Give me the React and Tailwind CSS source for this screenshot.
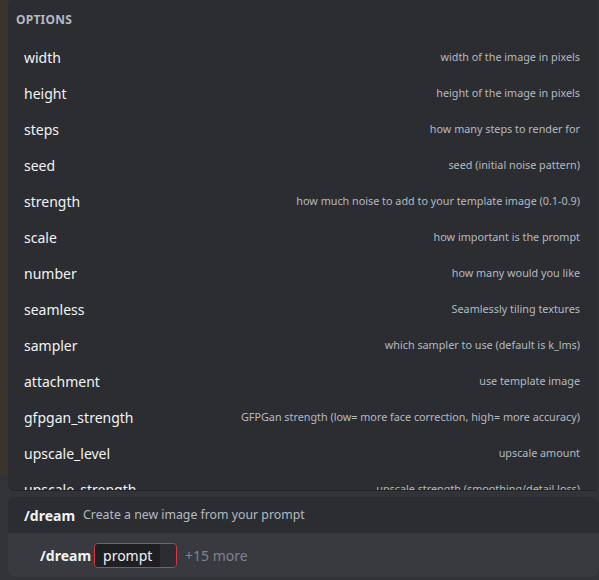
import React from "react";

const options = [
  ["width", "width of the image in pixels"],
  ["height", "height of the image in pixels"],
  ["steps", "how many steps to render for"],
  ["seed", "seed (initial noise pattern)"],
  ["strength", "how much noise to add to your template image (0.1-0.9)"],
  ["scale", "how important is the prompt"],
  ["number", "how many would you like"],
  ["seamless", "Seamlessly tiling textures"],
  ["sampler", "which sampler to use (default is k_lms)"],
  ["attachment", "use template image"],
  ["gfpgan_strength", "GFPGan strength (low= more face correction, high= more accuracy)"],
  ["upscale_level", "upscale amount"],
  ["upscale_strength", "upscale strength (smoothing/detail loss)"],
];

export default function App() {
  return (
    <div
      className="w-[599px] h-[580px] bg-[#313338] flex overflow-hidden"
      style={{ fontFamily: "'Noto Sans', 'Open Sans', sans-serif" }}
    >
      {/* strip of the channel behind */}
      <div className="w-[8px] flex flex-col shrink-0">
        <div className="h-[476px] bg-[#3a342c]" />
        <div className="flex-1 bg-[#313338]" />
      </div>

      <div className="flex-1 flex flex-col">
        {/* options popup */}
        <div className="h-[491px] mr-[2px] bg-[#2b2d31] rounded-tl-lg rounded-bl-lg border-b border-[#232428] overflow-hidden">
          <div className="h-[39px] pl-2 flex items-center text-[12px] font-bold text-[#b5bac1] tracking-[0.02em]">
            OPTIONS
          </div>
          {options.map(([name, desc]) => (
            <div key={name} className="h-[36px] pl-4 pr-[17px] flex items-center justify-between">
              <span className="text-[14px] text-[#f2f3f5]">{name}</span>
              <span className="text-[10.8px] text-[#b5bac1]">{desc}</span>
            </div>
          ))}
        </div>

        {/* chat box */}
        <div className="mt-[6px] rounded-lg overflow-hidden">
          <div className="h-[36px] bg-[#2b2d31] pl-4 flex items-center gap-[8px]">
            <span className="text-[14px] font-bold text-[#f2f3f5]">/dream</span>
            <span className="text-[12.3px] text-[#b5bac1]">Create a new image from your prompt</span>
          </div>
          <div className="h-[44px] bg-[#383a40] pl-8 flex items-center">
            <span className="text-[14px] font-bold text-[#f2f3f5]">/dream</span>
            <div className="ml-[3px] h-[25px] w-[83px] rounded-[4px] border border-[#da373c] flex overflow-hidden">
              <div className="bg-[#1e1f22] flex items-center pl-[8px] pr-[8px] text-[14px] text-[#f2f3f5]">
                prompt
              </div>
              <div className="flex-1 bg-[#2b2d31]" />
            </div>
            <span className="ml-[8px] text-[14px] text-[#80848e]">+15 more</span>
          </div>
        </div>
      </div>
    </div>
  );
}
